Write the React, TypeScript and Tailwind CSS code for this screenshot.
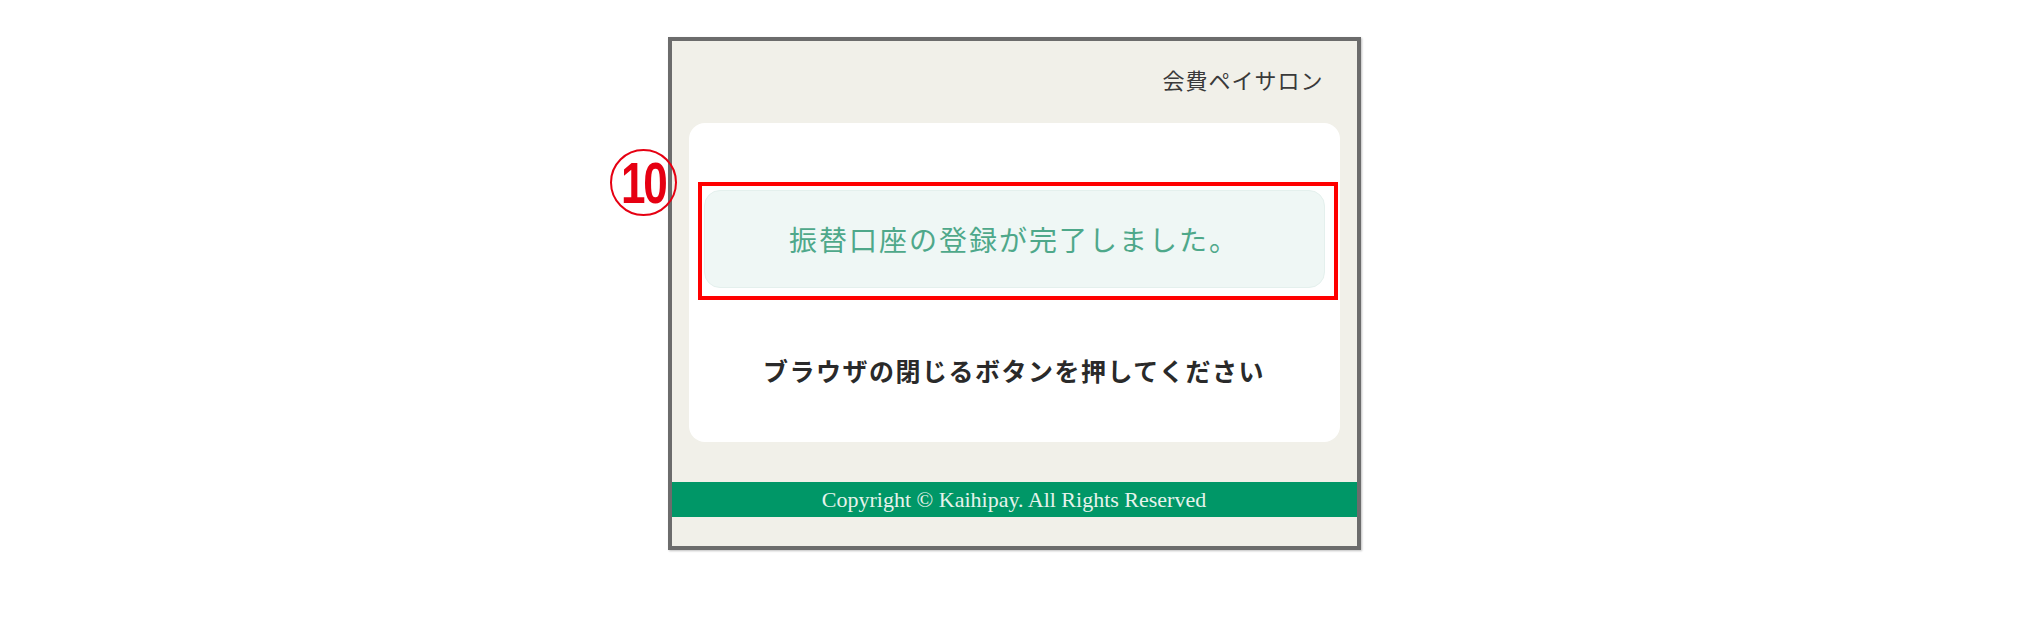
export default function App() {
    const jp = '"Noto Sans CJK JP", "Noto Sans", sans-serif'

    return (
        <div className="min-h-screen w-full bg-white pt-[37px]">
            <div className="relative mx-auto flex h-[513px] w-[693px] flex-col border-4 border-[#6c6c6c] bg-[#f1f0e9] shadow-[1px_1px_2px_rgba(0,0,0,0.25)]">
                {/* header */}
                <div className="flex h-[82px] justify-end pr-[33px] pt-[23px]">
                    <span className="text-[22px] leading-[30px] tracking-[1px] text-[#3a3a3a]" style={{ fontFamily: jp }}>
                        会費ペイサロン
                    </span>
                </div>

                {/* card */}
                <div className="relative mx-[17px] h-[319px] rounded-[16px] bg-white px-[15px] pt-[67px]">
                    <div className="flex h-[98px] items-center justify-center rounded-[16px] border border-[#e4f0ed] bg-[#eff7f5]">
                        <p className="text-[28px] leading-[34px] tracking-[2px] text-[#4ea88a]" style={{ fontFamily: jp }}>
                            振替口座の登録が完了しました。
                        </p>
                    </div>
                    <p className="mt-[66px] text-center text-[25px] font-bold leading-[32px] tracking-[1.5px] text-[#2a2a2a]" style={{ fontFamily: jp }}>
                        ブラウザの閉じるボタンを押してください
                    </p>

                    {/* annotation box */}
                    <div className="absolute left-[9px] top-[59px] h-[118px] w-[640px] border-4 border-[#ff0000]" />
                </div>

                {/* footer */}
                <div className="mt-[40px] flex h-[35px] items-center justify-center bg-[#009767]">
                    <span className="text-[22px] leading-none text-[#e6f3ec]" style={{ fontFamily: '"Liberation Serif", serif' }}>
                        Copyright © Kaihipay. All Rights Reserved
                    </span>
                </div>

                {/* step number */}
                <div className="absolute left-[-62px] top-[108px] flex h-[67px] w-[67px] items-center justify-center rounded-full border-2 border-[#e60012]">
                    <span
                        className="inline-block scale-x-[0.76] text-[58px] font-bold leading-none tracking-[-3px] text-[#e60012]"
                        style={{ fontFamily: '"Liberation Sans", Arial, sans-serif' }}
                    >
                        10
                    </span>
                </div>
            </div>
        </div>
    )
}
